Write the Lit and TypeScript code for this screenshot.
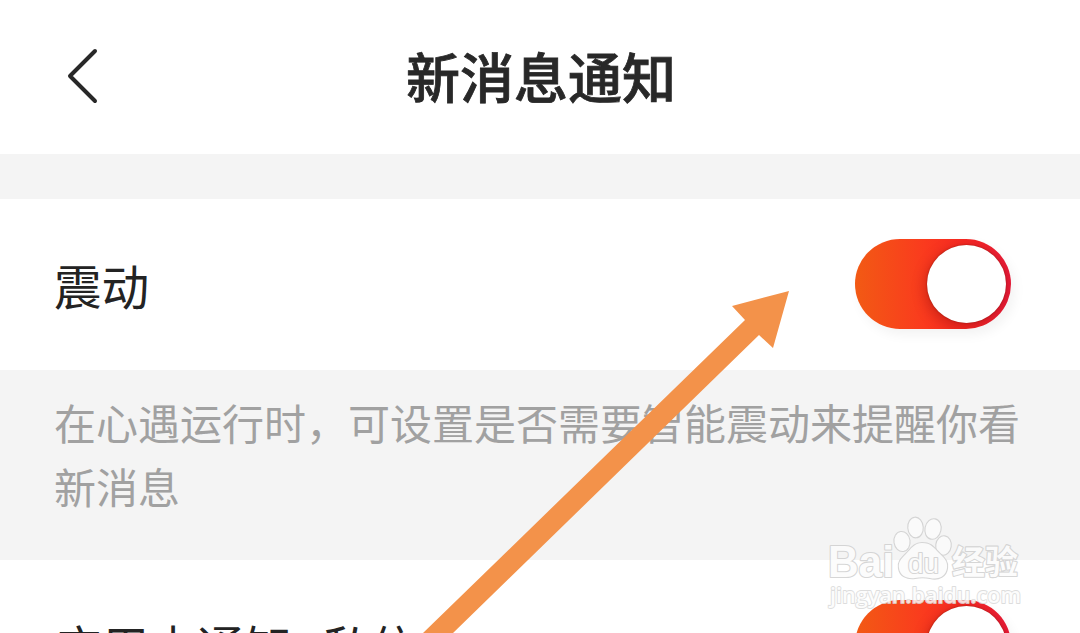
import { html, css, svg, LitElement } from 'lit';
import { customElement, property } from 'lit/decorators.js';

@customElement('toggle-switch')
export class ToggleSwitch extends LitElement {
  static styles = css`
    :host {
      display: block;
      flex: none;
    }

    .shade {
      display: block;
      border-radius: 45px;
      box-shadow: 4px 6px 12px rgba(0, 0, 0, 0.05);
    }

    .track {
      box-sizing: border-box;
      display: flex;
      justify-content: flex-end;
      align-items: center;
      width: 156px;
      height: 90px;
      padding: 0 5px 1px 0;
      border: none;
      border-radius: 45px;
      overflow: hidden;
      background: linear-gradient(90deg, #f25a14 0%, #fa3a1e 45%, #f72a22 68%, #e61a38 100%);
    }

    .knob {
      width: 79px;
      height: 78px;
      border-radius: 50%;
      background: #fff;
      box-shadow: -2px 4px 14px rgba(110, 0, 0, 0.32), 0 0 2px rgba(120, 20, 10, 0.7);
    }
  `;

  render() {
    return html`<div class="shade">
      <button class="track" role="switch" aria-checked="true">
        <span class="knob"></span>
      </button>
    </div>`;
  }
}

@customElement('setting-row')
export class SettingRow extends LitElement {
  static styles = css`
    :host {
      box-sizing: border-box;
      display: flex;
      align-items: center;
      justify-content: space-between;
      flex: none;
      height: 171px;
      padding: 0 69px 1px 54px;
      background: #fff;
    }

    .label {
      padding-top: 2px;
      color: #232323;
      font-size: 47.6px;
      line-height: 70px;
      word-spacing: 4px;
    }
  `;

  @property() label = '';

  render() {
    return html`
      <span class="label">${this.label}</span>
      <toggle-switch></toggle-switch>
    `;
  }
}

const toes = [
  { x: 902, y: 541.5, rx: 7.5, ry: 9.5, turn: -8 },
  { x: 915.5, y: 527.5, rx: 7.2, ry: 9.8, turn: -4 },
  { x: 933, y: 529, rx: 7.5, ry: 9.8, turn: 12 },
  { x: 943.5, y: 545.5, rx: 7.2, ry: 9.2, turn: 8 },
];

@customElement('app-root')
export class AppRoot extends LitElement {
  static styles = css`
    :host {
      display: flex;
      flex-direction: column;
      position: relative;
      height: 633px;
      overflow: hidden;
      background: #fff;
      font-family: 'Noto Sans CJK SC', sans-serif;
    }

    .header {
      display: grid;
      grid-template-columns: 160px 1fr 160px;
      align-items: center;
      flex: none;
      height: 154px;
      background: #fff;
    }

    .back {
      display: flex;
      padding: 0 0 2px 62px;
      border: none;
      background: none;
    }

    .title {
      margin: 0;
      padding: 0 0 2px 2px;
      color: #282828;
      font-size: 54px;
      font-weight: 500;
      line-height: 80px;
      text-align: center;
      -webkit-text-stroke: 0.8px #282828;
    }

    .gap {
      flex: none;
      height: 45px;
      background: #f4f4f4;
    }

    .hint {
      box-sizing: border-box;
      flex: none;
      height: 190px;
      margin: 0;
      padding: 20px 54px 0;
      color: #a1a1a1;
      background: #f4f4f4;
      font-size: 42px;
      line-height: 64px;
    }

    .overlay {
      position: absolute;
      top: 0;
      left: 0;
      pointer-events: none;
    }

    .arrow {
      fill: #f3924a;
    }

    .mark {
      fill: #fcfcfc;
      stroke: #cfcfcf;
      stroke-width: 2.2;
      stroke-linejoin: round;
      paint-order: stroke;
      opacity: 0.85;
    }

    .logo {
      font: bold 44px 'Liberation Sans', sans-serif;
    }

    .du {
      font: 28px 'Liberation Sans', sans-serif;
    }

    .name {
      font: bold 33px 'Noto Sans CJK SC', sans-serif;
    }

    .site {
      font: 600 21.5px 'Open Sans', sans-serif;
      stroke: #d8d8d8;
      stroke-width: 1.8;
    }
  `;

  get header() {
    return html`<header class="header">
      <button class="back" aria-label="返回">
        <svg width="42" height="60" viewBox="0 0 42 60">
          <path
            d="M33 5 L8 30 L33 55"
            fill="none"
            stroke="#282828"
            stroke-width="4"
            stroke-linecap="round"
            stroke-linejoin="round"
          />
        </svg>
      </button>
      <h1 class="title">新消息通知</h1>
    </header>`;
  }

  get watermark() {
    return svg`<g class="mark">
      <text class="logo" x="828" y="577" textLength="66" lengthAdjust="spacingAndGlyphs">Bai</text>
      ${toes.map(
        t => svg`<ellipse
          cx=${t.x} cy=${t.y} rx=${t.rx} ry=${t.ry}
          transform="rotate(${t.turn} ${t.x} ${t.y})"
        />`,
      )}
      <path d="M922 543 C914 543 911 549 906 554 C901 559 898 562 899 568 C900 576 907 579 915 578 C920 577 925 577 930 578 C939 580 946 576 947 568 C948 561 944 558 939 553 C934 548 931 543 922 543Z" />
      <text class="du" x="908" y="573" textLength="31" lengthAdjust="spacingAndGlyphs">du</text>
      <text class="name" x="952" y="574" textLength="66" lengthAdjust="spacingAndGlyphs">经验</text>
      <text class="site" x="830" y="602.5" textLength="191" lengthAdjust="spacingAndGlyphs">jingyan.baidu.com</text>
    </g>`;
  }

  render() {
    return html`
      ${this.header}
      <div class="gap"></div>
      <setting-row label="震动"></setting-row>
      <p class="hint">在心遇运行时，可设置是否需要智能震动来提醒你看新消息</p>
      <setting-row label="应用内通知- 私信"></setting-row>
      <svg class="overlay" width="1080" height="633" viewBox="0 0 1080 633">
        <path class="arrow" d="M789 291 L732 306 L745 320 L422 634 L452 634 L759 335 L773 348Z" />
        ${this.watermark}
      </svg>
    `;
  }
}
